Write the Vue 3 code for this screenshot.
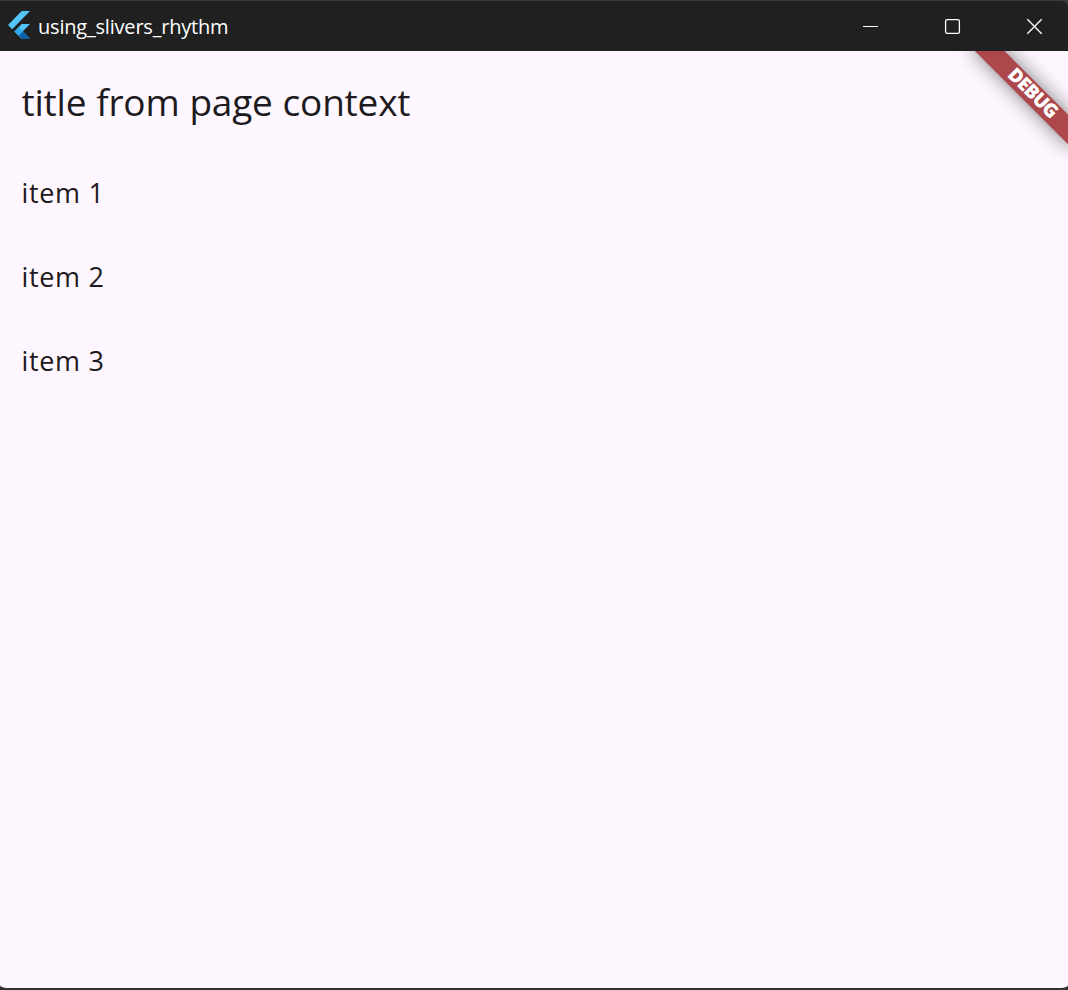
<script setup>
const items = ['item 1', 'item 2', 'item 3']
</script>

<template>
  <div class="window">
    <header class="titlebar">
      <svg class="logo" width="22" height="28" viewBox="0 0 22 28">
        <path d="M13.7 0H22L4.2 18.2 0 14z" fill="#54c5f8" />
        <path d="M13.7 13H22L14.8 20.3 22 28H13.7L6.4 20.5z" fill="#54c5f8" />
        <path d="M10.6 24.6 14.8 20.3 22 28H13.7z" fill="#0b5fa5" />
        <path d="M6.4 20.5 10.6 16.2 14.8 20.3 10.6 24.6z" fill="#29a9e8" />
      </svg>
      <span class="caption">using_slivers_rhythm</span>
      <div class="controls">
        <svg width="82" height="50" viewBox="0 0 82 50"><path d="M35 25.5H50" stroke="#fff" /></svg>
        <svg width="82" height="50" viewBox="0 0 82 50"><rect x="35.6" y="18.6" width="13.8" height="13.8" rx="1.6" fill="none" stroke="#fff" stroke-width="1.3" /></svg>
        <svg width="76" height="50" viewBox="0 0 76 50"><path d="M35.3 18.3 49.7 32.7M49.7 18.3 35.3 32.7" stroke="#fff" stroke-width="1.35" /></svg>
      </div>
    </header>
    <main class="page">
      <h1>title from page context</h1>
      <ul>
        <li v-for="item in items" :key="item">{{ item }}</li>
      </ul>
      <div class="banner"><span>DEBUG</span></div>
    </main>
  </div>
</template>

<style>
body { margin: 0; background: #343036; }
</style>

<style scoped>
.window {
  width: 1068px;
  height: 990px;
  box-sizing: border-box;
  border-top: 1px solid #3b3b3b;
  border-bottom: 2px solid #343036;
  background: #343036;
  font-family: "Open Sans", "Noto Sans", sans-serif;
  overflow: hidden;
}
.titlebar {
  display: flex;
  height: 50px;
  background: #202020;
  color: #fff;
  border-top-right-radius: 8px;
}
.logo { margin: 10px 8px 0; flex: none; }
.caption {
  font-size: 20px;
  line-height: 52px;
  letter-spacing: -0.2px;
}
.controls { display: flex; margin-left: auto; }
.page {
  position: relative;
  height: 937px;
  overflow: hidden;
  background: #fef7ff;
  color: #1d1b20;
  border-radius: 0 0 7px 7px / 0 0 3px 3px;
}
h1 {
  margin: 0;
  padding: 25px 0 0 21.5px;
  font-size: 37px;
  line-height: 52px;
  font-weight: 400;
  letter-spacing: -0.22px;
  word-spacing: 0.6px;
  white-space: nowrap;
}
ul { margin: 23px 0 0; padding: 0 0 0 21.5px; list-style: none; }
li {
  height: 84px;
  line-height: 84px;
  font-size: 27px;
  font-weight: 400;
  letter-spacing: 0.6px;
  word-spacing: 0.4px;
}
.banner {
  position: absolute;
  left: 998px;
  top: 44.5px;
  width: 140px;
  height: 21px;
  transform-origin: 70px -44.5px;
  transform: rotate(45deg);
  background: #ac474b;
  box-shadow: 0 0 20px rgba(0, 0, 0, 0.5);
  color: #fff;
  font-size: 19px;
  line-height: 21px;
  font-weight: 800;
  letter-spacing: -0.8px;
  text-align: center;
}
.banner span {
  display: block;
  padding-left: 9px;
  margin-top: -1px;
}
</style>
